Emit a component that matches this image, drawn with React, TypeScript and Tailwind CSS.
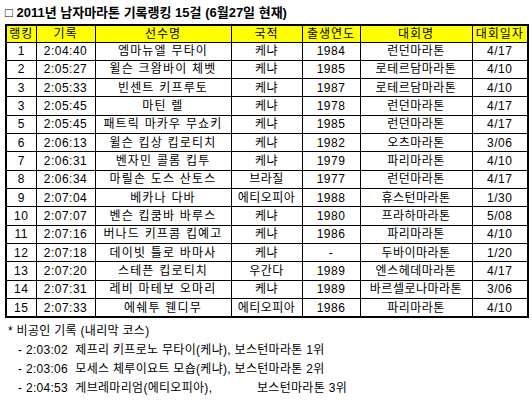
const ROWS: [string, string, string, string, string, string, string][] = [
  ['1', '2:04:40', '엠마뉴엘 무타이', '케냐', '1984', '런던마라톤', '4/17'],
  ['2', '2:05:27', '윌슨 크왐바이 체벳', '케냐', '1985', '로테르담마라톤', '4/10'],
  ['3', '2:05:33', '빈센트 키프루토', '케냐', '1987', '로테르담마라톤', '4/10'],
  ['3', '2:05:45', '마틴 렐', '케냐', '1978', '런던마라톤', '4/17'],
  ['5', '2:05:45', '패트릭 마카우 무쇼키', '케냐', '1985', '런던마라톤', '4/17'],
  ['6', '2:06:13', '윌슨 킵상 킵로티치', '케냐', '1982', '오츠마라톤', '3/06'],
  ['7', '2:06:31', '벤자민 콜롬 킵투', '케냐', '1979', '파리마라톤', '4/10'],
  ['8', '2:06:34', '마릴손 도스 산토스', '브라질', '1977', '런던마라톤', '4/17'],
  ['9', '2:07:04', '베카나 다바', '에티오피아', '1988', '휴스턴마라톤', '1/30'],
  ['10', '2:07:07', '벤슨 킵쿰바 바루스', '케냐', '1980', '프라하마라톤', '5/08'],
  ['11', '2:07:16', '버나드 키프콤 킵예고', '케냐', '1986', '파리마라톤', '4/10'],
  ['12', '2:07:18', '데이빗 틀로 바마사', '케냐', '-', '두바이마라톤', '1/20'],
  ['13', '2:07:20', '스테픈 킵로티치', '우간다', '1989', '엔스헤데마라톤', '4/17'],
  ['14', '2:07:31', '레비 마테보 오마리', '케냐', '1989', '바르셀로나마라톤', '3/06'],
  ['15', '2:07:33', '에쉐투 웬디무', '에티오피아', '1986', '파리마라톤', '4/10'],
];

const HEADERS = ['랭킹', '기록', '선수명', '국적', '출생연도', '대회명', '대회일자'];
const WIDTHS = ['w-[30px]', 'w-[59px]', 'w-[136px]', 'w-[71px]', 'w-[58px]', 'w-[112px]', 'w-[56px]'];

export default function App() {
  return (
    <div
      className="w-[532px] h-[404px] bg-white text-black text-[12px] leading-none"
      style={{ fontFamily: '"Liberation Sans", "Noto Sans CJK KR", sans-serif' }}
    >
      {/* 제목 */}
      <div className="h-[24px] pl-[5px] pt-[5px] text-[13px] font-bold leading-[15px]">
        □ 2011년 남자마라톤 기록랭킹 15걸 (6월27일 현재)
      </div>

      <table className="ml-[5px] w-[522px] table-fixed border-collapse border-2 border-black">
        <colgroup>
          {WIDTHS.map((w, i) => (
            <col key={i} className={w} />
          ))}
        </colgroup>
        <thead>
          <tr className="h-[17px] bg-[#ffff00]">
            {HEADERS.map((h) => (
              <th key={h} className="border border-black p-0 font-normal text-center tracking-[1px]">
                {h}
              </th>
            ))}
          </tr>
        </thead>
        <tbody>
          {ROWS.map((row, r) => (
            <tr key={r} className="h-[18.33px]">
              {row.map((cell, c) => (
                <td
                  key={c}
                  className={`border border-black p-0 text-center whitespace-nowrap ${c === 2 ? 'tracking-[1.2px]' : 'tracking-[0.5px]'}`}
                >
                  {cell}
                </td>
              ))}
            </tr>
          ))}
        </tbody>
      </table>

      {/* 비공인 기록 */}
      <div className="pt-[4px] leading-[19px] tracking-[0.3px]">
        <div className="pl-[8px]">* 비공인 기록 (내리막 코스)</div>
        <div className="pl-[18px]">- 2:03:02&nbsp; 제프리 키프로노 무타이(케냐), 보스턴마라톤 1위</div>
        <div className="pl-[18px]">- 2:03:06&nbsp; 모세스 체루이요트 모숍(케냐), 보스턴마라톤 2위</div>
        <div className="pl-[18px] flex">
          <span className="w-[239px]">- 2:04:53&nbsp; 게브레마리엄(에티오피아),</span>
          <span>보스턴마라톤 3위</span>
        </div>
      </div>
    </div>
  );
}
